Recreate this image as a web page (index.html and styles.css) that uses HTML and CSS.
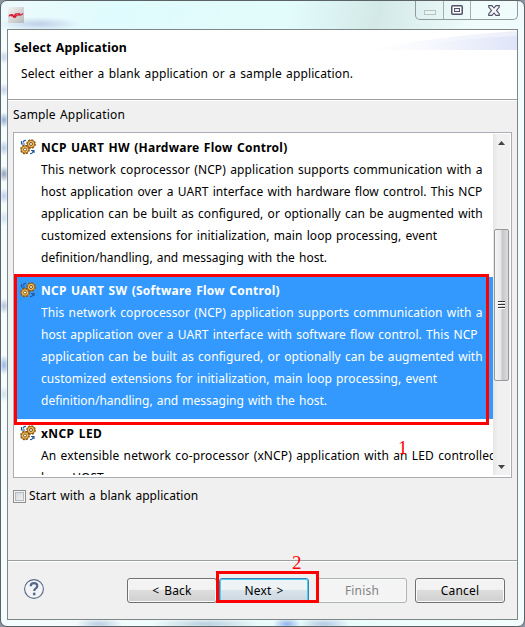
FILE: index.html
```html
<!DOCTYPE html>
<html lang="en">
<head>
<meta charset="utf-8">
<title>Select Application</title>
<link rel="stylesheet" href="styles.css">
</head>
<body>
<svg class="defs" width="0" height="0" aria-hidden="true">
  <symbol id="gears" viewBox="0 0 16 16">
    <circle cx="11" cy="5" r="4.1" fill="#f3bd4b" stroke="#80501c" stroke-width="1.5" stroke-dasharray="2 1.2"/>
    <circle cx="11" cy="5" r="3.6" fill="#f6c65a" stroke="#94601f" stroke-width=".9"/>
    <circle cx="11" cy="5" r="1.5" fill="#fff" stroke="#80501c"/>
    <circle cx="5" cy="10.5" r="4.1" fill="#f3bd4b" stroke="#80501c" stroke-width="1.5" stroke-dasharray="2 1.2"/>
    <circle cx="5" cy="10.5" r="3.6" fill="#f6c65a" stroke="#94601f" stroke-width=".9"/>
    <circle cx="5" cy="10.5" r="1.5" fill="#fff" stroke="#80501c"/>
    <path d="M6 1.5Q4 1 3 3.5M1.5 2V5H5M10 14.5Q12.500 15 13 12M11 11.500H14V14" fill="none" stroke="#245a9c" stroke-width="1.2"/>
  </symbol>
</svg>
<div class="window">
  <header class="titlebar">
    <svg class="logo" width="16" height="16" viewBox="0 0 16 16"><defs><linearGradient id="lg" x1="0" y1="0" x2="1" y2="1"><stop offset="0" stop-color="#f4f4f4"/><stop offset="1" stop-color="#b9b9b9"/></linearGradient></defs><rect width="16" height="16" fill="url(#lg)"/><path d="M1 9.300Q1.500 7.500 4.500 7.800L4 8.800H8.500L9.500 8M6.500 8L8 6.800H11.500L11 8.200Q14 8.300 15 6.500M5 10.200H8" fill="none" stroke="#d8142c" stroke-width="1.300"/></svg>
    <div class="controls">
      <span class="ctl min"><svg width="12" height="5"><rect x=".5" y=".5" width="11" height="4" fill="#e9f5f3" stroke="#b4c4c2"/></svg></span>
      <span class="ctl max"><svg width="12" height="10"><rect x=".75" y=".75" width="10.5" height="8.500" rx="1" fill="#fff" stroke="#50536a" stroke-width="1.500"/><rect x="3.500" y="3.500" width="5" height="3" fill="#eee" stroke="#50536a"/></svg></span>
      <span class="ctl close"><svg width="12" height="11" viewBox="0 0 12 11"><path d="M.7.600H4L6 3 8 .600H11.300V2L8.500 5.400 11.300 9V10.400H8L6 8 4 10.400H.7V9L3.500 5.400.7 2Z" fill="#f6f6f8" stroke="#50536a" stroke-width="1.100"/></svg></span>
    </div>
  </header>
  <main class="dialog">
    <section class="banner">
      <svg class="swoosh" width="150" height="20" viewBox="0 0 150 20"><defs><linearGradient id="sw"><stop offset="0" stop-color="#fff"/><stop offset="1" stop-color="#dfe5f8"/></linearGradient></defs><path d="M0 20Q70 6 150 1V20Z" fill="url(#sw)" opacity=".6"/><path d="M30 20Q90 8 150 6V20Z" fill="url(#sw)"/></svg>
      <h1><span class="t h">Select Application</span></h1>
      <p><span class="t p">Select either a blank application or a sample application.</span></p>
    </section>
    <section class="content">
      <div class="label"><span class="t lb">Sample Application</span></div>
      <div class="listbox">
        <div class="items">
          <article class="item">
            <svg class="gear" width="16" height="16"><use href="#gears"/></svg>
            <div><h2><span class="t a0">NCP UART HW (Hardware Flow Control)</span></h2>
            <p><span class="t a1">This network coprocessor (NCP) application supports communication with a</span><br>
            <span class="t a2">host application over a UART interface with hardware flow control. This NCP</span><br>
            <span class="t a3">application can be built as configured, or optionally can be augmented with</span><br>
            <span class="t a4">customized extensions for initialization, main loop processing, event</span><br>
            <span class="t a5">definition/handling, and messaging with the host.</span></p></div>
          </article>
          <article class="item selected">
            <svg class="gear" width="16" height="16"><use href="#gears"/></svg>
            <div><h2><span class="t a0">NCP UART SW (Software Flow Control)</span></h2>
            <p><span class="t a1">This network coprocessor (NCP) application supports communication with a</span><br>
            <span class="t a2">host application over a UART interface with software flow control. This NCP</span><br>
            <span class="t a3">application can be built as configured, or optionally can be augmented with</span><br>
            <span class="t a4">customized extensions for initialization, main loop processing, event</span><br>
            <span class="t a5">definition/handling, and messaging with the host.</span></p></div>
          </article>
          <article class="item">
            <svg class="gear" width="16" height="16"><use href="#gears"/></svg>
            <div><h2><span class="t c0">xNCP LED</span></h2>
            <p><span class="t c1">An extensible network co-processor (xNCP) application with an LED controlled</span><br>
            <span class="t c2">by a HOST</span></p></div>
          </article>
        </div>
        <div class="scrollbar">
          <svg width="7" height="4"><path d="M0 4L3.500 0 7 4Z" fill="#444"/></svg>
          <div class="track"><div class="thumb"><i></i><i></i><i></i></div></div>
          <svg width="7" height="4"><path d="M0 0H7L3.500 4Z" fill="#444"/></svg>
        </div>
      </div>
      <div class="check"><span class="box"></span><span class="t ck">Start with a blank application</span></div>
    </section>
    <footer class="footer">
      <svg class="help" width="22" height="22" viewBox="0 0 22 22"><circle cx="11" cy="11" r="9.400" fill="#f2f4f8" stroke="#566a88" stroke-width="1.100"/><path d="M7.700 8.300Q7.700 5.200 11 5.200Q14.300 5.200 14.300 8Q14.300 9.500 12.500 10.600Q11.200 11.500 11.200 13" fill="none" stroke="#566a88" stroke-width="2.200"/><circle cx="11.200" cy="16" r="1.400" fill="#566a88"/></svg>
      <div class="buttons">
        <button class="btn back">&lt; Back</button><button class="btn next">Next &gt;</button><button class="btn finish" disabled>Finish</button><button class="btn cancel">Cancel</button>
      </div>
    </footer>
  </main>
</div>
<div class="mark mark-item"></div>
<div class="mark mark-next"></div>
<span class="num one">1</span>
<span class="num two">2</span>
</body>
</html>
```
FILE: styles.css
```css
* { box-sizing: border-box; }
body { margin: 0; width: 525px; height: 627px; overflow: hidden; position: relative; background: #8b93a0; font: 12px/22px "Noto Sans", "Open Sans", sans-serif; color: #000; }
.defs { position: absolute; }
h1, h2, p { margin: 0; font-size: 12px; line-height: 22px; }
.t { white-space: nowrap; word-spacing: 1px; }
.h { letter-spacing: .12px; }
.p { letter-spacing: .12px; }
.lb { letter-spacing: .16px; }
.a0 { letter-spacing: .26px; }
.a1 { letter-spacing: .11px; }
.a2 { letter-spacing: .07px; }
.a3 { letter-spacing: .08px; }
.a4 { letter-spacing: .07px; }
.c0 { letter-spacing: .37px; }
.c1 { letter-spacing: .13px; }
.c2 { word-spacing: 2.5px; }
.ck { letter-spacing: .05px; }
.window { width: 525px; height: 627px; border: 1px solid #5c6366; border-radius: 7px; padding: 0 6px 6px; display: flex; flex-direction: column;
  background:
    radial-gradient(ellipse 42px 7px at 38px 23px, #bfd0ea, transparent),
    radial-gradient(ellipse 5px 7px at 3px 56px, #c3d3ea, transparent),
    radial-gradient(ellipse 5px 7px at 3px 89px, #c3d3ea, transparent),
    radial-gradient(ellipse 5px 8px at 3px 119px, #8fabd8, transparent),
    radial-gradient(ellipse 5px 8px at 3px 147px, #b4c8e8, transparent),
    radial-gradient(ellipse 5px 8px at 3px 173px, #8d9dba, transparent),
    radial-gradient(ellipse 5px 8px at 3px 195px, #bacdf0, transparent),
    radial-gradient(ellipse 5px 8px at 3px 217px, #cfe0f4, transparent),
    radial-gradient(ellipse 5px 8px at 3px 305px, #b0c0dc, transparent),
    radial-gradient(ellipse 5px 10px at 3px 364px, #95b5e4, transparent),
    radial-gradient(ellipse 5px 8px at 3px 393px, #cfe2f0, transparent),
    radial-gradient(ellipse 24px 6px at 98px 623px, #b9cfe4, transparent),
    radial-gradient(ellipse 54px 6px at 205px 623px, #b9cfdf, transparent),
    radial-gradient(ellipse 14px 6px at 286px 623px, #8fb2ec, transparent),
    radial-gradient(ellipse 26px 6px at 323px 623px, #b4c8e4, transparent),
    linear-gradient(100deg, #eefafd 0, #e0fbfd 20%, #e2fcfb 55%, #d3e9e8 72%, #effcfb 90%) 0 0 / 100% 29px no-repeat,
    linear-gradient(90deg, #f5fcfd, #e8fbfb 60%, #f3fdfd); }
.titlebar { height: 28px; flex: none; display: flex; justify-content: space-between; }
.logo { margin: 6px 0 0 1px; }
.controls { display: flex; height: 19px; width: 103px; border: 1px solid #8f9a9b; border-top: 0; border-radius: 0 0 5px 5px; }
.ctl { display: flex; align-items: center; justify-content: center; border-right: 1px solid #a4b0b0; width: 28px; }
.max { width: 27px; }
.close { flex: 1; border: 0; }
.min { padding-top: 5px; }
.dialog { flex: 1; border: 1px solid #7e8686; background: #f0f0f0; display: flex; flex-direction: column; }
.banner { height: 70px; flex: none; background: #fff; border-bottom: 1px solid #9b9f9f; position: relative; padding: 7px 0 0 6px; }
.banner h1 { height: 26px; font-weight: 700; font-size: 12.3px; }
.banner p { padding-left: 7px; }
.swoosh { position: absolute; right: 0; top: 0; }
.content { flex: 1; padding: 3px 5px 0; border-top: 1px solid #fff; }
.label { height: 28px; }
.listbox { width: 499px; height: 346px; border: 1px solid #abadb3; background: #fff; display: flex; padding: 1px 1px 2px; }
.items { flex: 1; overflow: hidden; }
.item { height: 143px; padding: 3px 0 0 5px; display: flex; gap: 5px; border-bottom: 1px solid #fff; }
.gear { flex: none; margin-top: 2px; }
.selected { background: #3399ff; background-clip: padding-box; color: #fff; }
.scrollbar { width: 17px; background: linear-gradient(90deg, #e6e6e6, #f1f1f1 30%); display: flex; flex-direction: column; align-items: center; padding: 7px 0 6px; }
.track { flex: 1; width: 15px; margin-right: 1px; padding-top: 84px; }
.thumb { height: 152px; border: 1px solid #979797; border-radius: 2px; background: linear-gradient(90deg, #f5f5f5, #e8e8ea 45%, #c6c6cb 55%, #dcdcdf); display: flex; flex-direction: column; align-items: center; justify-content: center; gap: 1px; }
.thumb i { width: 7px; height: 2px; border-top: 1px solid #333; background: #fff; }
.check { display: flex; align-items: center; gap: 3px; margin-top: 7px; }
.box { width: 13px; height: 13px; border: 1px solid #8e8f8f; box-shadow: inset 0 0 0 1px #f4f4f4, inset 0 0 0 2px #b4bac2; background: linear-gradient(135deg, #cfd3d8, #f6f6f6); }
.footer { height: 59px; flex: none; border-top: 1px solid #9b9f9f; box-shadow: inset 0 1px #fff; padding: 17px 12px 0 15px; display: flex; justify-content: space-between; }
.buttons { display: flex; }
.btn { width: 90px; height: 25px; border: 1px solid #707070; border-radius: 3px; padding: 0; font: inherit; color: #000; background: linear-gradient(#f3f3f3 0 45%, #dddddd 50%, #cfcfcf); box-shadow: inset 0 0 0 1px #fafafa; letter-spacing: .2px; word-spacing: 1.5px; }
.btn.next { margin-left: 2px; border-color: #3c7fb1; box-shadow: inset 0 0 0 1px #48d0f5; background: linear-gradient(#eef3f6 0 45%, #d8e3ea 50%, #cbd7df); }
.btn.finish { margin-left: 8px; border-color: #adb2b5; background: #f4f4f4; color: #838383; }
.btn.cancel { margin-left: 8px; }
.mark { position: absolute; border: 3px solid #f00; }
.mark-item { left: 14px; top: 274px; width: 475px; height: 151px; }
.mark-next { left: 216px; top: 571px; width: 103px; height: 32px; }
.num { position: absolute; color: #f00; font: 19px/18px "Liberation Serif", serif; }
.one { left: 398px; top: 439px; }
.two { left: 292px; top: 554px; }
```
